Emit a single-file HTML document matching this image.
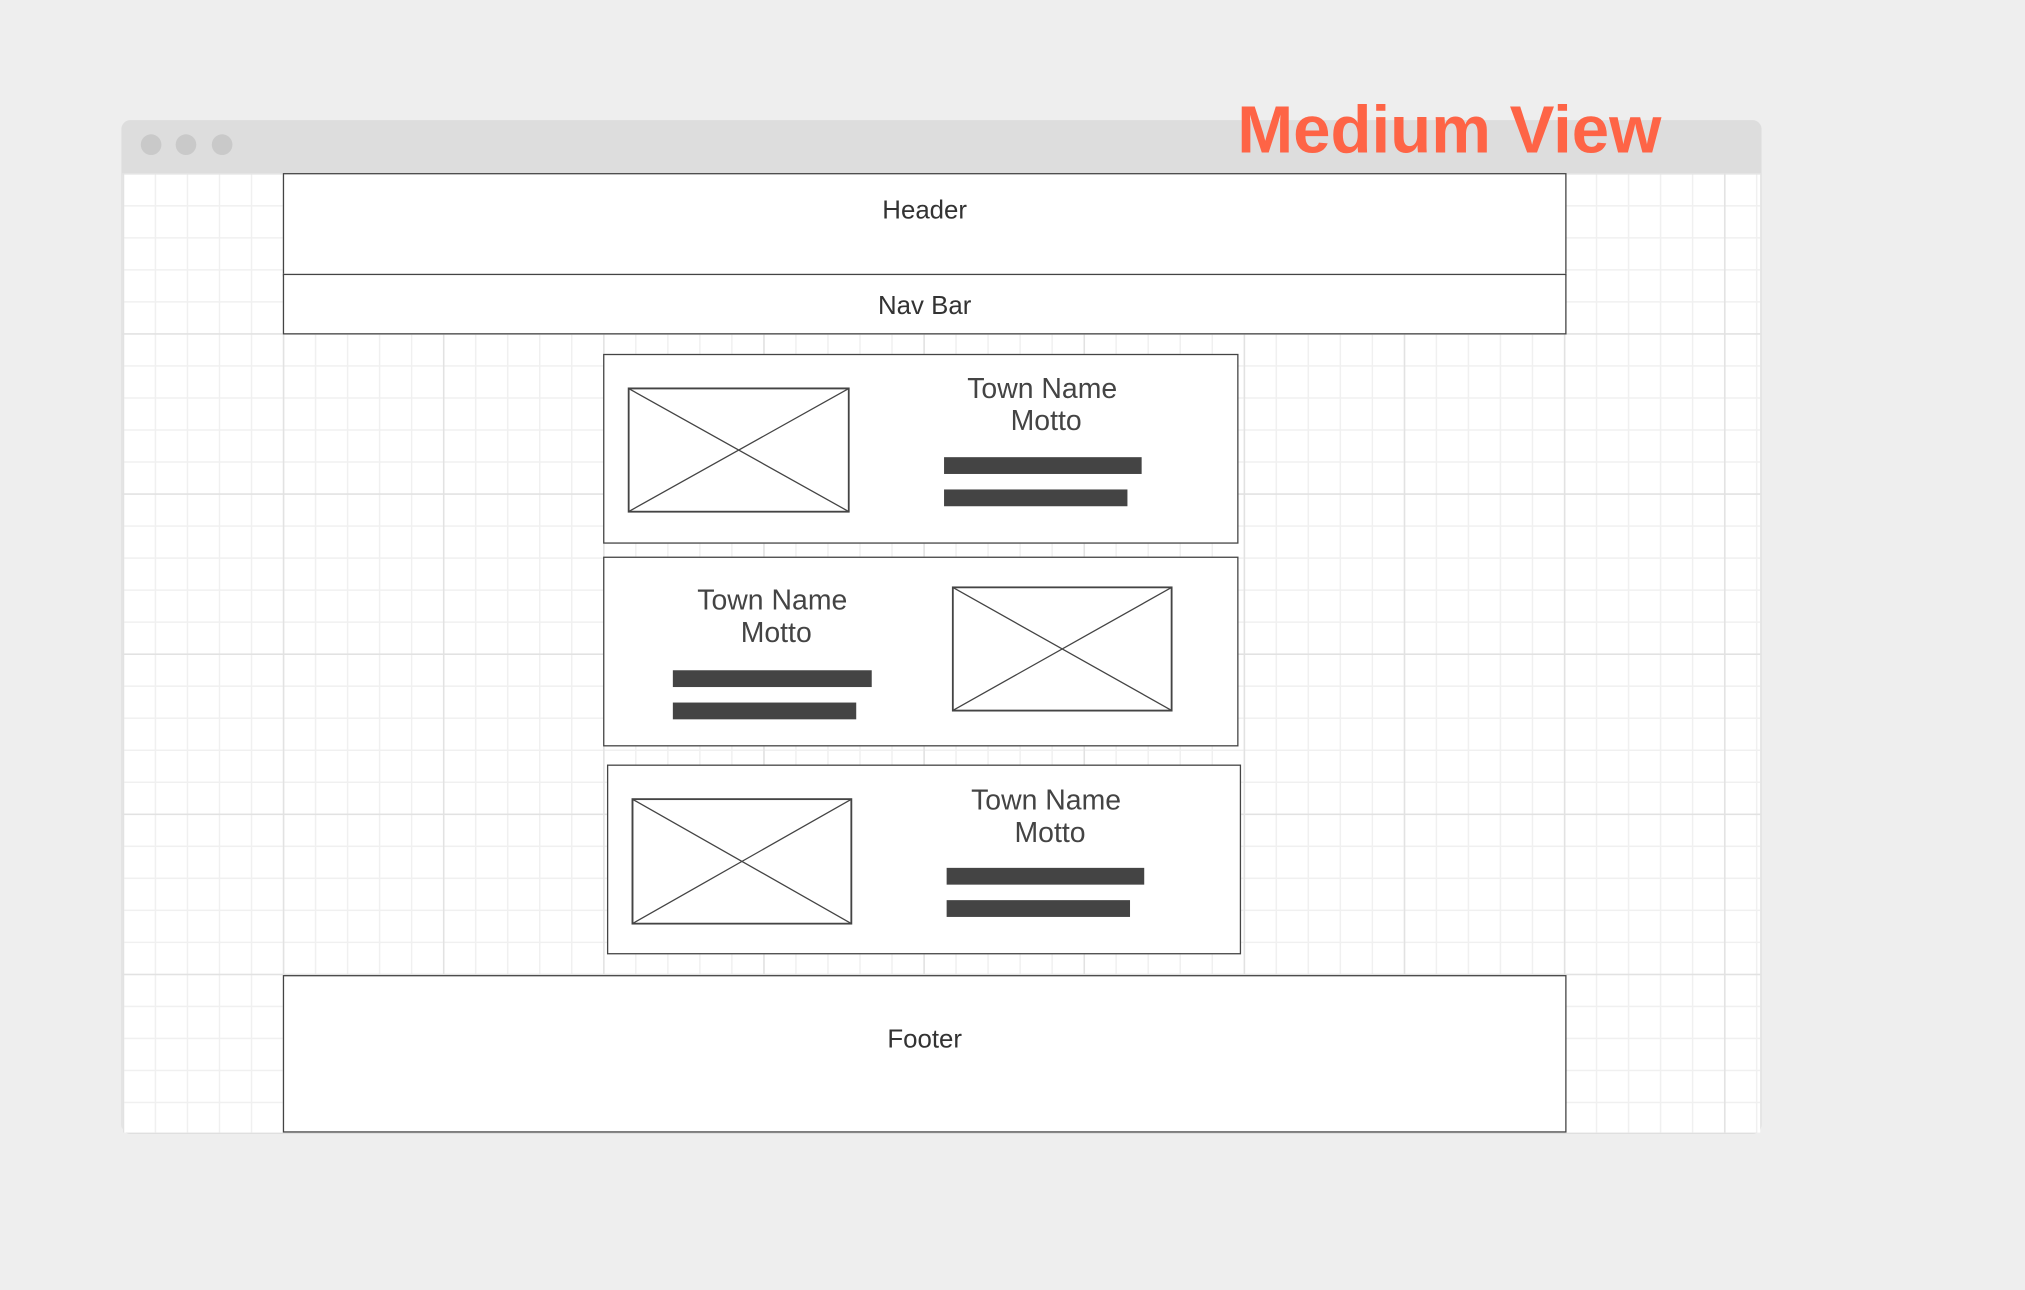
<!DOCTYPE html>
<html><head><meta charset="utf-8"><style>
html,body{margin:0;padding:0;background:#eeeeee;width:2025px;height:1290px;overflow:hidden}
#s{position:absolute;left:0;top:0;width:1568px;height:999px;transform:scale(1.29145);transform-origin:0 0;font-family:"Liberation Sans",sans-serif;color:#333}
.a{position:absolute;box-sizing:border-box}
.win{left:94px;top:93px;width:1270px;height:785px;border-radius:7px;background:#ddd;overflow:hidden}
.grid{left:95px;top:134px;width:1268px;height:743px;background-color:#fff;
background-image:
linear-gradient(to right,#e2e2e2 1.2px,transparent 1.2px),
linear-gradient(to bottom,#e2e2e2 1.2px,transparent 1.2px),
linear-gradient(to right,#f0f0f0 1px,transparent 1px),
linear-gradient(to bottom,#f0f0f0 1px,transparent 1px);
background-size:124px 124px,124px 124px,24.8px 24.8px,24.8px 24.8px;
background-position:0 0,0 0,0 0,0 0}
.dot{width:16px;height:16px;border-radius:50%;background:#c9c9c9;top:104px}
.box{border:1.5px solid #444;background:#fff}
.t{position:absolute;font-size:15px;color:#333;text-align:center;white-space:nowrap}
.tn{position:absolute;font-size:22px;line-height:24.5px;color:#444;text-align:center;white-space:nowrap}
.bar{position:absolute;background:#444;height:13px}
svg.x{position:absolute}
</style></head><body><div id="s">
<div class="a win"></div>
<div class="a grid"></div>
<div class="a dot" style="left:109px"></div>
<div class="a dot" style="left:136px"></div>
<div class="a dot" style="left:164px"></div>
<div class="a" style="left:958px;top:70px;font-size:52px;font-weight:bold;color:#fe6446;line-height:62px;white-space:nowrap">Medium View</div>

<div class="a box" style="left:219px;top:134px;width:994px;height:80px"></div>
<div class="t" style="left:219px;width:994px;top:152px;font-size:20px">Header</div>
<div class="a box" style="left:219px;top:212px;width:994px;height:47px"></div>
<div class="t" style="left:219px;width:994px;top:226px;font-size:20px">Nav Bar</div>

<div class="a box" style="left:467px;top:274px;width:492px;height:147px"></div>
<svg class="x" style="left:486px;top:300px" width="172" height="97"><rect x=".75" y=".75" width="170.5" height="95.5" fill="#fff" stroke="#444" stroke-width="1.5"/><path d="M1 1L171 96M171 1L1 96" stroke="#444" stroke-width="1"/></svg>
<div class="tn" style="left:707px;width:200px;top:289px">Town Name<br>&nbsp;Motto</div>
<div class="bar" style="left:731px;top:354px;width:153px"></div>
<div class="bar" style="left:731px;top:379px;width:142px"></div>

<div class="a box" style="left:467px;top:431px;width:492px;height:147px"></div>
<svg class="x" style="left:737px;top:454px" width="171" height="97"><rect x=".75" y=".75" width="169.5" height="95.5" fill="#fff" stroke="#444" stroke-width="1.5"/><path d="M1 1L170 96M170 1L1 96" stroke="#444" stroke-width="1"/></svg>
<div class="tn" style="left:498px;width:200px;top:453px">Town Name<br>&nbsp;Motto</div>
<div class="bar" style="left:521px;top:519px;width:154px"></div>
<div class="bar" style="left:521px;top:544px;width:142px"></div>

<div class="a box" style="left:470px;top:592px;width:491px;height:147px"></div>
<svg class="x" style="left:489px;top:618px" width="171" height="98"><rect x=".75" y=".75" width="169.5" height="96.5" fill="#fff" stroke="#444" stroke-width="1.5"/><path d="M1 1L170 97M170 1L1 97" stroke="#444" stroke-width="1"/></svg>
<div class="tn" style="left:710px;width:200px;top:608px">Town Name<br>&nbsp;Motto</div>
<div class="bar" style="left:733px;top:672px;width:153px"></div>
<div class="bar" style="left:733px;top:697px;width:142px"></div>

<div class="a box" style="left:219px;top:755px;width:994px;height:122px"></div>
<div class="t" style="left:219px;width:994px;top:794px;font-size:20px">Footer</div>
</div></body></html>
